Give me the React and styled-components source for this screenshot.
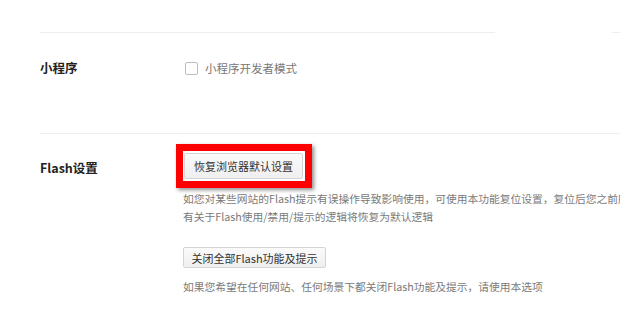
import React from "react";
import styled, { createGlobalStyle } from "styled-components";

const GlobalStyle = createGlobalStyle`
  html, body {
    margin: 0;
    padding: 0;
    background: #fff;
    overflow: hidden;
  }
  body {
    font-family: "Noto Sans CJK SC", "Noto Sans", "Liberation Sans", sans-serif;
  }
`;

const Page = styled.div`
  width: 620px;
  height: 309px;
  overflow: hidden;
  padding: 32px 0 0 40px;
  box-sizing: border-box;
`;

const Divider = styled.div`
  display: flex;
  gap: 117px;
  width: 620px;
`;

const Line = styled.div`
  height: 1px;
  background: #eeeeee;
  width: ${p => (p.$w ? `${p.$w}px` : "auto")};
  flex: ${p => (p.$w ? "none" : "1")};
`;

const Row = styled.div`
  display: grid;
  grid-template-columns: 143px 1fr;
  padding: ${p => p.$pad};
`;

const Label = styled.div`
  font-size: 12.5px;
  font-weight: bold;
  color: #222;
  line-height: 18px;
  margin-top: ${p => p.$top || 0}px;
`;

const Content = styled.div`
  display: flex;
  flex-direction: column;
  align-items: flex-start;
`;

const CheckRow = styled.label`
  display: flex;
  align-items: center;
  gap: 7px;
  margin-left: 2px;
  font-size: 11.5px;
  line-height: 18px;
  color: #777;
`;

const Box = styled.span`
  width: 11px;
  height: 11px;
  border: 1px solid #bdbdbd;
  border-radius: 2px;
  background: #fff;
`;

const Highlight = styled.div`
  margin-left: -7px;
  border: 7px solid #ff0000;
  padding: 2px 2px 2px 1px;
  box-shadow: 2px 2px 4px rgba(0, 0, 0, 0.45);
  background: #fff;
`;

const Button = styled.button`
  display: flex;
  align-items: center;
  justify-content: center;
  box-sizing: border-box;
  width: ${p => p.$w}px;
  height: ${p => p.$h}px;
  margin-top: ${p => p.$top || 0}px;
  padding: 0;
  border: 1px solid #d4d4d4;
  border-radius: 2px;
  background: linear-gradient(#fbfbfb, #efefef);
  font-family: inherit;
  font-size: 11px;
  color: #333;
`;

const Desc = styled.p`
  margin: ${p => p.$top || 0}px 0 0;
  font-size: 10.75px;
  line-height: 18px;
  color: #7a7a7a;
  white-space: nowrap;
`;

export default function App() {
  return (
    <Page>
      <GlobalStyle />
      <Divider>
        <Line $w={455} />
        <Line />
      </Divider>
      <Row $pad="26px 0 56px">
        <Label>小程序</Label>
        <Content>
          <CheckRow>
            <Box />
            小程序开发者模式
          </CheckRow>
        </Content>
      </Row>
      <Divider>
        <Line />
      </Divider>
      <Row $pad="10px 0 0">
        <Label $top={15}>Flash设置</Label>
        <Content>
          <Highlight>
            <Button $w={119} $h={26}>恢复浏览器默认设置</Button>
          </Highlight>
          <Desc $top={2}>
            如您对某些网站的Flash提示有误操作导致影响使用，可使用本功能复位设置，复位后您之前所
            <br />
            有关于Flash使用/禁用/提示的逻辑将恢复为默认逻辑
          </Desc>
          <Button $w={143} $h={21} $top={21}>关闭全部Flash功能及提示</Button>
          <Desc $top={10}>如果您希望在任何网站、任何场景下都关闭Flash功能及提示，请使用本选项</Desc>
        </Content>
      </Row>
    </Page>
  );
}
